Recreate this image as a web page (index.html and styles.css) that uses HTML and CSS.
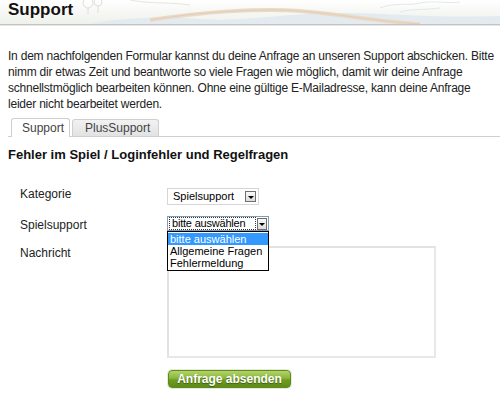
FILE: index.html
```html
<!DOCTYPE html>
<html lang="de">
<head>
<meta charset="utf-8">
<title>Support</title>
<link rel="stylesheet" href="styles.css">
</head>
<body>
<header class="page-header">
  <svg class="header-art" width="500" height="24" viewBox="0 0 500 24" aria-hidden="true">
    <path d="M90 24 C120 18 160 16 200 19 C240 22 280 14 330 13 C380 12 420 18 500 16 L500 24 Z" fill="#e3ebf0"/>
    <path d="M150 20 C200 12 260 8 300 11 C340 14 380 22 420 24" fill="none" stroke="#eadbc8" stroke-width="4"/>
    <path d="M150 20 C200 12 260 8 300 11 C340 14 380 22 420 24" fill="none" stroke="#d8c4ad" stroke-width="0.6"/>
    <circle cx="88" cy="3" r="5" fill="none" stroke="#d4d8cf" stroke-width="0.8"/>
    <circle cx="98" cy="2" r="4" fill="none" stroke="#d4d8cf" stroke-width="0.8"/>
    <path d="M88 8 L88 14 M98 6 L98 13" stroke="#d4d8cf" stroke-width="0.8"/>
    <path d="M130 0 C150 4 170 2 190 5" fill="none" stroke="#dde0d8" stroke-width="0.8"/>
    <path d="M380 8 C395 2 410 6 420 3 C435 0 445 4 460 2" fill="none" stroke="#dde2e6" stroke-width="0.8"/>
    <path d="M400 12 C410 9 425 10 440 8" fill="none" stroke="#dde2e6" stroke-width="0.8"/>
  </svg>
  <h1 class="page-title">Support</h1>
</header>

<p class="intro">In dem nachfolgenden Formular kannst du deine Anfrage an unseren Support abschicken. Bitte nimm dir etwas Zeit und beantworte so viele Fragen wie möglich, damit wir deine Anfrage schnellstmöglich bearbeiten können. Ohne eine gültige E-Mailadresse, kann deine Anfrage leider nicht bearbeitet werden.</p>

<nav class="tabs">
  <span class="tab tab-active">Support</span>
  <span class="tab">PlusSupport</span>
</nav>

<h2 class="section-title">Fehler im Spiel / Loginfehler und Regelfragen</h2>

<form class="form">
  <div class="row row-1">
    <span class="label">Kategorie</span>
    <div class="select select-1">
      <span class="select-text">Spielsupport</span>
      <span class="select-btn"><span class="arrow"></span></span>
    </div>
  </div>
  <div class="row row-2">
    <span class="label">Spielsupport</span>
    <div class="select-wrap">
      <div class="select select-2">
        <span class="select-text focus">bitte auswählen</span>
        <span class="select-btn"><span class="arrow"></span></span>
      </div>
      <ul class="dropdown">
        <li class="opt opt-selected">bitte auswählen</li>
        <li class="opt">Allgemeine Fragen</li>
        <li class="opt">Fehlermeldung</li>
      </ul>
    </div>
  </div>
  <div class="row row-3">
    <span class="label">Nachricht</span>
    <div class="textarea"></div>
  </div>
  <div class="row row-4">
    <span class="label"></span>
    <button type="button" class="submit">Anfrage absenden</button>
  </div>
</form>
</body>
</html>
```

FILE: styles.css
```css
html, body {
  margin: 0;
  padding: 0;
  background: #fff;
}
body {
  font-family: "Liberation Sans", Arial, sans-serif;
  color: #222;
  width: 500px;
  height: 405px;
  overflow: hidden;
}
.page-header {
  position: relative;
  height: 24px;
  background: linear-gradient(#ffffff, #eef1ea);
  border-bottom: 1px solid #c4c4c4;
  box-shadow: 0 1px 0 #e6e6e6;
}
.header-art {
  position: absolute;
  left: 0;
  top: 0;
}
.page-title {
  position: relative;
  margin: 0;
  padding: 0 0 0 8px;
  font-size: 17px;
  line-height: 20px;
  font-weight: bold;
  color: #111;
  text-shadow: 0 0 2px #fff;
}
.intro {
  margin: 23px 0 0 8px;
  font-size: 12px;
  line-height: 16px;
  letter-spacing: -0.22px;
  color: #222;
}
.tabs {
  display: flex;
  align-items: flex-end;
  gap: 2px;
  margin: 5px 0 0 8px;
  padding-left: 3px;
  height: 19px;
  border-bottom: 1px solid #cfcfcf;
}
.tab {
  font-size: 12px;
  line-height: 16px;
  height: 16px;
  padding: 0 12px;
  color: #444;
  background: linear-gradient(#f2f2f2, #e2e2e2);
  border: 1px solid #cfcfcf;
  border-bottom: none;
  border-radius: 3px 3px 0 0;
}
.tab-active {
  background: #fff;
  height: 18px;
  line-height: 19px;
  padding: 0 10px;
  margin-bottom: -1px;
  position: relative;
  width: 37px;
}
.tab:not(.tab-active) {
  width: 61px;
}
.section-title {
  margin: 10px 0 0 8px;
  font-size: 13px;
  line-height: 16px;
  font-weight: bold;
  color: #111;
}
.form {
  margin: 23px 0 0 0;
  padding-left: 20px;
}
.row {
  display: flex;
  align-items: flex-start;
}
.label {
  flex: 0 0 147px;
  font-size: 12px;
  line-height: 16px;
  color: #222;
}
.row-1 { height: 31px; }
.row-2 { height: 28px; position: relative; z-index: 2; }
.row-3 { height: 125px; }
.select {
  display: flex;
  align-items: center;
  box-sizing: border-box;
  font-size: 11px;
  color: #000;
  background: #fff;
}
.select-1 {
  margin-top: 2px;
  width: 92px;
  height: 17px;
  border: 1px solid #d6d6d6;
  padding: 0 2px 0 5px;
}
.select-2 {
  margin-top: -1px;
  width: 102px;
  height: 15px;
  border: 1px solid #7f9db9;
  padding: 0 1px 0 1px;
}
.select-text {
  flex: 1;
  line-height: 13px;
  white-space: nowrap;
  overflow: hidden;
}
.select-text.focus {
  border: 1px dotted #333;
  line-height: 11px;
  padding-left: 2px;
  margin-right: 1px;
  letter-spacing: -0.2px;
}
.select-btn {
  box-sizing: border-box;
  flex: 0 0 auto;
  width: 11px;
  height: 11px;
  border: 1px solid #6f6f6f;
  background: linear-gradient(#fafafa, #dcdcdc);
  display: flex;
  align-items: center;
  justify-content: center;
}
.select-2 .select-btn {
  height: 12px;
  width: 10px;
}
.arrow {
  width: 0;
  height: 0;
  border-left: 3px solid transparent;
  border-right: 3px solid transparent;
  border-top: 3px solid #000;
  margin-top: 1px;
}
.select-wrap {
  position: relative;
}
.dropdown {
  position: absolute;
  left: 0;
  top: 14px;
  box-sizing: border-box;
  width: 102px;
  margin: 0;
  padding: 1px 0 1px 0;
  list-style: none;
  background: #fff;
  border: 1px solid #000;
  font-size: 11px;
}
.opt {
  height: 12px;
  line-height: 12px;
  padding-left: 2px;
  color: #000;
  white-space: nowrap;
}
.opt-selected {
  background: #3399ff;
  color: #fff;
}
.textarea {
  margin-top: 1px;
  box-sizing: border-box;
  width: 269px;
  height: 112px;
  border: 2px solid #e2e2e2;
  border-right-color: #e8e8e8;
  border-bottom-color: #e8e8e8;
  background: #fff;
}
.submit {
  margin-left: 1px;
  box-sizing: border-box;
  width: 123px;
  height: 18px;
  border: 1px solid #5f8a1c;
  border-radius: 4px;
  background: linear-gradient(#b3d36a 0%, #8ab83a 45%, #6f9c22 55%, #5f8c18 100%);
  box-shadow: 0 0 0 1px #e4ecd8;
  color: #fff;
  font-family: "Liberation Sans", Arial, sans-serif;
  font-size: 12px;
  font-weight: bold;
  line-height: 14px;
  padding: 0;
  text-shadow: 0 1px 1px #3d5a0c;
}
```
